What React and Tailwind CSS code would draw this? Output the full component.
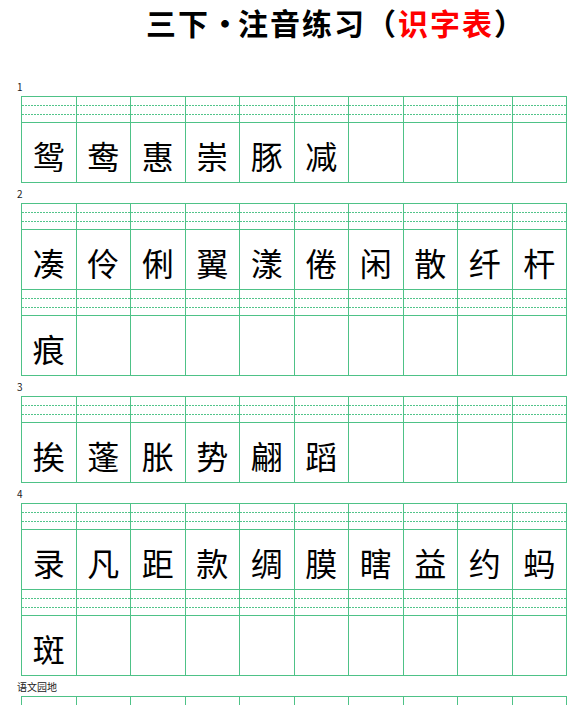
const LINE = "border-[#4ec287]";
const DOTS =
  "h-px bg-[repeating-linear-gradient(90deg,#52c48a_0_2px,transparent_2px_3px)]";

const SECTIONS = [
  { label: "1", rows: [["鸳", "鸯", "惠", "崇", "豚", "减"]] },
  {
    label: "2",
    rows: [
      ["凑", "伶", "俐", "翼", "漾", "倦", "闲", "散", "纤", "杆"],
      ["痕"],
    ],
  },
  { label: "3", rows: [["挨", "蓬", "胀", "势", "翩", "蹈"]] },
  {
    label: "4",
    rows: [
      ["录", "凡", "距", "款", "绸", "膜", "瞎", "益", "约", "蚂"],
      ["斑"],
    ],
  },
  { label: "语文园地", rows: [[], []] },
];

function Cell({ ch }) {
  return (
    <div className={`flex flex-col border-t border-r ${LINE}`}>
      {/* pinyin lines */}
      <div className="h-[8px]" />
      <div className={DOTS} />
      <div className="h-[8px]" />
      <div className={DOTS} />
      <div className="h-[7px]" />
      <div
        className={`flex h-[60px] items-center justify-center border-t ${LINE} pt-[4px] text-[32px] leading-none text-black`}
      >
        {ch || ""}
      </div>
    </div>
  );
}

function Block({ label, rows }) {
  return (
    <div>
      <div className="flex h-[20px] items-center pl-[17px] pt-[2px] text-[10px] leading-none text-[#222]">
        {label}
      </div>
      <div className={`ml-[21px] w-[546px] border-b border-l ${LINE}`}>
        {rows.map((row, i) => (
          <div key={i} className="grid grid-cols-10">
            {Array.from({ length: 10 }).map((_, j) => (
              <Cell key={j} ch={row[j]} />
            ))}
          </div>
        ))}
      </div>
    </div>
  );
}

export default function App() {
  return (
    <div
      className="min-h-screen w-[587px] bg-white"
      style={{ fontFamily: '"Noto Sans CJK SC", "Liberation Sans", sans-serif' }}
    >
      <div className="flex h-[76px] items-start pl-[146px] pt-[4px]">
        <h1 className="flex whitespace-nowrap text-[30px] font-bold leading-[36px] tracking-[2px] text-black">
          <span>三下</span>
          <span className="w-[28px] text-center tracking-normal">·</span>
          <span>注音练习（</span>
          <span className="text-[#ff0000]">识字表</span>
          <span>）</span>
        </h1>
      </div>
      {SECTIONS.map((s) => (
        <Block key={s.label} label={s.label} rows={s.rows} />
      ))}
    </div>
  );
}
